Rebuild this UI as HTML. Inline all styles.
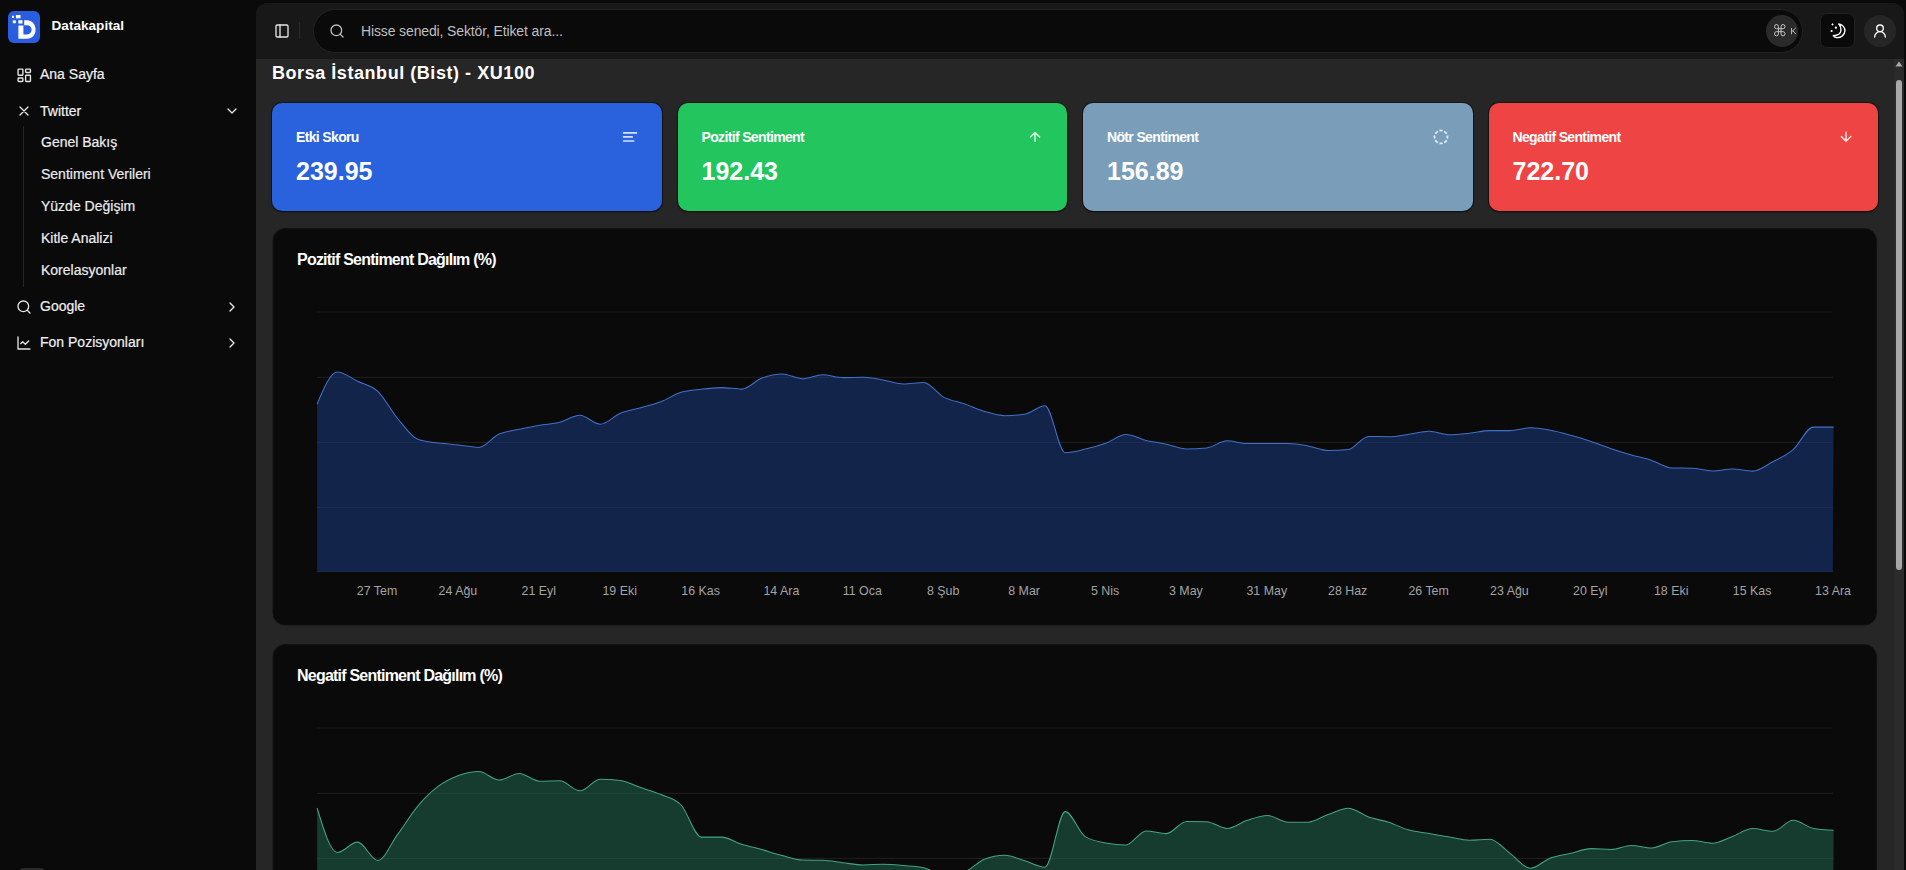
<!DOCTYPE html>
<html lang="tr">
<head>
<meta charset="utf-8">
<title>Datakapital</title>
<style>
*{box-sizing:border-box;margin:0;padding:0}
html,body{width:1906px;height:870px;overflow:hidden;background:#0a0a0a;font-family:"Liberation Sans",sans-serif;color:#fafafa}
.abs{position:absolute}
#sidebar{position:absolute;left:0;top:0;width:256px;height:870px;background:#0a0a0a}
.logo{position:absolute;left:8px;top:11px;width:32px;height:32px;border-radius:6px;background:#2a5ee0}
.brand{position:absolute;left:51.5px;top:17px;font-size:13.6px;font-weight:bold;color:#fff;line-height:18px}
.nav{position:absolute;left:40px;font-size:14px;line-height:18px;color:#f0f0f0;-webkit-text-stroke:0.2px #f0f0f0}
.sub{position:absolute;left:41px;font-size:14px;line-height:18px;color:#ececec;-webkit-text-stroke:0.2px #ececec}
.ico{position:absolute}
#main{position:absolute;left:256px;top:3px;width:1648px;height:867px;background:#262626;border-radius:12px 12px 0 0;overflow:hidden}
#header{position:absolute;left:0;top:0;width:1648px;height:56px;background:#181818}
#content{position:absolute;left:0;top:56px;width:1648px;height:811px;background:#262626}
.card{position:absolute;top:44px;width:389.5px;height:108px;border-radius:10px;box-shadow:0 0 0 1px rgba(0,0,0,0.35),0 1px 2px rgba(0,0,0,0.5)}
.card .t{position:absolute;left:24px;top:26px;font-size:14px;font-weight:bold;color:#fff;letter-spacing:-0.65px;line-height:16px}
.card .v{position:absolute;left:24px;top:54px;font-size:25px;font-weight:bold;color:#fff;line-height:28px}
.card svg{position:absolute}
.chart{position:absolute;left:16px;width:1605px;background:#0a0a0a;border-radius:12px;border:1px solid #141414}
.chart .ttl{position:absolute;left:24px;font-size:16px;font-weight:bold;color:#fff;letter-spacing:-0.4px;line-height:18px}
.xl{position:absolute;top:584px;font-size:12.4px;color:#a3a3a3;line-height:14px;white-space:nowrap;transform:translateX(-50%)}
</style>
</head>
<body>
<div id="sidebar">
  <div class="logo">
    <svg width="32" height="32" viewBox="0 0 32 32">
      <rect x="4" y="4.8" width="2" height="2.1" fill="#fff"/>
      <rect x="7.9" y="4" width="4.6" height="3.3" fill="#fff"/>
      <rect x="4.8" y="9.4" width="3.1" height="2.8" fill="#fff"/>
      <rect x="10.4" y="9.2" width="4.1" height="3.3" fill="#fff"/>
      <path d="M10.4 14.5 H15.4 V23.4 H19 C21.8 23.4 23.6 21.5 23.6 18.8 C23.6 16.1 21.8 14.3 19 14.3 H16.2 V9.2 H19 C24 9.2 27.6 13.2 27.6 18.5 C27.6 23.8 24 27.8 19 27.8 H10.4 Z" fill="#fff"/>
    </svg>
  </div>
  <div class="brand">Datakapital</div>

  <svg class="ico" style="left:16px;top:66.5px" width="16.5" height="16.5" viewBox="0 0 24 24" fill="none" stroke="#e5e5e5" stroke-width="2" stroke-linecap="round" stroke-linejoin="round"><rect width="7" height="9" x="3" y="3" rx="1"/><rect width="7" height="5" x="14" y="3" rx="1"/><rect width="7" height="9" x="14" y="12" rx="1"/><rect width="7" height="5" x="3" y="16" rx="1"/></svg>
  <div class="nav" style="top:65px">Ana Sayfa</div>

  <svg class="ico" style="left:16px;top:103px" width="16" height="16" viewBox="0 0 24 24" fill="none" stroke="#e5e5e5" stroke-width="2" stroke-linecap="round"><path d="M18 6 6 18M6 6l12 12"/></svg>
  <div class="nav" style="top:102px">Twitter</div>
  <svg class="ico" style="left:224px;top:103px" width="16" height="16" viewBox="0 0 24 24" fill="none" stroke="#e5e5e5" stroke-width="2" stroke-linecap="round" stroke-linejoin="round"><path d="m6 9 6 6 6-6"/></svg>

  <div class="abs" style="left:23px;top:126px;width:1px;height:161px;background:#262626"></div>
  <div class="sub" style="top:133px">Genel Bakış</div>
  <div class="sub" style="top:165px">Sentiment Verileri</div>
  <div class="sub" style="top:197px">Yüzde Değişim</div>
  <div class="sub" style="top:229px">Kitle Analizi</div>
  <div class="sub" style="top:261px">Korelasyonlar</div>

  <svg class="ico" style="left:16px;top:299px" width="16" height="16" viewBox="0 0 24 24" fill="none" stroke="#e5e5e5" stroke-width="2" stroke-linecap="round" stroke-linejoin="round"><circle cx="11" cy="11" r="8"/><path d="m21 21-4.3-4.3"/></svg>
  <div class="nav" style="top:297px">Google</div>
  <svg class="ico" style="left:224px;top:299px" width="16" height="16" viewBox="0 0 24 24" fill="none" stroke="#e5e5e5" stroke-width="2" stroke-linecap="round" stroke-linejoin="round"><path d="m9 18 6-6-6-6"/></svg>

  <svg class="ico" style="left:16px;top:335px" width="16" height="16" viewBox="0 0 24 24" fill="none" stroke="#e5e5e5" stroke-width="2" stroke-linecap="round" stroke-linejoin="round"><path d="M3 3v18h18"/><path d="m19 9-5 5-4-4-3 3"/></svg>
  <div class="nav" style="top:333px">Fon Pozisyonları</div>
  <svg class="ico" style="left:224px;top:335px" width="16" height="16" viewBox="0 0 24 24" fill="none" stroke="#e5e5e5" stroke-width="2" stroke-linecap="round" stroke-linejoin="round"><path d="m9 18 6-6-6-6"/></svg>

  <div class="abs" style="left:18px;top:868px;width:28px;height:20px;border-radius:6px;background:#2a2a2a"></div>
</div>

<div id="main">
  <div id="header">
    <svg class="ico" style="left:18px;top:20px" width="16" height="16" viewBox="0 0 24 24" fill="none" stroke="#e5e5e5" stroke-width="2" stroke-linecap="round" stroke-linejoin="round"><rect width="18" height="18" x="3" y="3" rx="2"/><path d="M9 3v18"/></svg>
    <div class="abs" style="left:43px;top:19px;width:1px;height:17px;background:#2a2a2a"></div>
    <div class="abs" style="left:57px;top:6px;width:1490px;height:44px;border-radius:22px;background:#0a0a0a;border:1px solid #232323"></div>
    <svg class="ico" style="left:73px;top:20px" width="16" height="16" viewBox="0 0 24 24" fill="none" stroke="#bdbdbd" stroke-width="2" stroke-linecap="round" stroke-linejoin="round"><circle cx="11" cy="11" r="8"/><path d="m21 21-4.3-4.3"/></svg>
    <div class="abs" style="left:105px;top:20px;font-size:14px;color:#bfbfbf;line-height:16px;letter-spacing:-0.13px">Hisse senedi, Sektör, Etiket ara...</div>
    <div class="abs" style="left:1510px;top:12px;width:32px;height:32px;border-radius:16px;background:#2a2a2a"></div>
    <svg class="abs" style="left:1517.8px;top:20.8px;overflow:visible" width="11.5" height="12.4" viewBox="0 0 11.5 12.4" fill="none" stroke="#cfcfcf" stroke-width="1"><g transform="translate(0.5 0.5) scale(0.913 0.919)"><path d="M4.3 4.6H7.2V7.8H4.3Z M4.3 4.6V2.3A2.15 2.3 0 1 0 2.15 4.6H4.3 M7.2 4.6V2.3A2.15 2.3 0 1 1 9.35 4.6H7.2 M4.3 7.8V10.1A2.15 2.3 0 1 1 2.15 7.8H4.3 M7.2 7.8V10.1A2.15 2.3 0 1 0 9.35 7.8H7.2"/></g></svg>
    <svg class="abs" style="left:1534.8px;top:24.7px;overflow:visible" width="5" height="6.2" fill="none" stroke="#bdbdbd" stroke-width="0.95"><path d="M0.5 0V6.2 M4.7 0 L0.5 4 M1.9 2.7 L4.8 6.2"/></svg>
    <div class="abs" style="left:1564px;top:10px;width:35px;height:35px;border-radius:7px;background:#0a0a0a;border:1px solid #222"></div>
    <svg class="abs" style="left:1568px;top:13px" width="28" height="28" viewBox="0 0 28 28" fill="none" stroke="#fff" stroke-width="1.4" stroke-linejoin="round"><path d="M14.8 8 C19 8.6 21.1 12 20.9 15 C20.6 19 17 21.9 12.9 21.6 C11.3 21.5 10.1 20.8 9.3 19.6 C13.6 19.6 16.9 17.4 17 14 C17.1 11.6 16.2 9.4 14.8 8 Z"/><g fill="#fff" stroke="none"><path d="M8.5 6.8 L9 8 L10.2 8.4 L9 8.8 L8.5 10 L8 8.8 L6.8 8.4 L8 8 Z"/><circle cx="11.9" cy="11.7" r="1.1"/><circle cx="7.6" cy="15" r="1.1"/></g></svg>
    <div class="abs" style="left:1608px;top:12px;width:32px;height:32px;border-radius:16px;background:#262626"></div>
    <svg class="ico" style="left:1616px;top:20px" width="16" height="16" viewBox="0 0 24 24" fill="none" stroke="#fff" stroke-width="2" stroke-linecap="round" stroke-linejoin="round"><circle cx="12" cy="8" r="5"/><path d="M20 21a8 8 0 0 0-16 0"/></svg>
  </div>

  <div id="content">
    <div class="abs" style="left:16px;top:3px;font-size:18px;font-weight:bold;color:#fff;line-height:22px;letter-spacing:0.55px">Borsa İstanbul (Bist) - XU100</div>

    <div class="card" style="left:16px;background:#2962dc">
      <div class="t">Etki Skoru</div><div class="v">239.95</div>
    </div>
    <div class="card" style="left:421.5px;background:#22c55e">
      <div class="t">Pozitif Sentiment</div><div class="v">192.43</div>
    </div>
    <div class="card" style="left:827px;background:#7a9eb9">
      <div class="t">Nötr Sentiment</div><div class="v">156.89</div>
    </div>
    <div class="card" style="left:1232.5px;background:#ef4444">
      <div class="t">Negatif Sentiment</div><div class="v">722.70</div>
    </div>

    <!-- scrollbar -->
    <div class="abs" style="left:1638px;top:0;width:10px;height:811px;background:#2b2b2b"></div>
  </div>
</div>

<!-- charts in page coordinates -->
<svg class="abs" style="left:0;top:0" width="1906" height="870">
  <rect x="273" y="228.5" width="1603.5" height="396.5" rx="12" fill="#0a0a0a" stroke="#121212"/>
  <rect x="273" y="644.5" width="1603.5" height="400" rx="12" fill="#0a0a0a" stroke="#121212"/>
  <g stroke="#161616" stroke-width="1">
    <line x1="317" x2="1833" y1="312" y2="312"/>
    <line x1="317" x2="1833" y1="377.3" y2="377.3"/>
    <line x1="317" x2="1833" y1="442.3" y2="442.3"/>
    <line x1="317" x2="1833" y1="507.3" y2="507.3"/>
    <line x1="317" x2="1833" y1="728" y2="728"/>
    <line x1="317" x2="1833" y1="793.3" y2="793.3"/>
    <line x1="317" x2="1833" y1="858.3" y2="858.3"/>
  </g>
  <path d="M317.1,404.3 C323.8,388.1 330.6,372.0 337.3,372.0 C344.1,372.0 350.8,378.1 357.5,381.3 C364.3,384.5 371.0,385.1 377.8,391.4 C384.5,397.7 391.2,411.0 398.0,419.0 C404.7,427.0 411.5,437.3 418.2,439.6 C424.9,441.9 431.7,442.1 438.4,443.0 C445.2,443.9 451.9,444.2 458.6,444.9 C465.4,445.6 472.1,447.4 478.9,447.4 C485.6,447.4 492.3,437.0 499.1,434.0 C505.8,431.0 512.6,430.8 519.3,429.3 C526.0,427.9 532.8,426.5 539.5,425.3 C546.3,424.1 553.0,423.9 559.7,422.2 C566.5,420.5 573.2,415.3 580.0,415.3 C586.7,415.3 593.4,424.2 600.2,424.2 C606.9,424.2 613.7,416.0 620.4,413.3 C627.1,410.6 633.9,409.7 640.6,407.8 C647.4,405.9 654.1,404.3 660.8,401.7 C667.6,399.1 674.3,394.4 681.1,392.3 C687.8,390.2 694.5,390.0 701.3,389.2 C708.0,388.4 714.8,387.6 721.5,387.6 C728.2,387.6 735.0,389.1 741.7,389.1 C748.5,389.1 755.2,380.6 761.9,378.1 C768.7,375.6 775.4,373.9 782.2,373.9 C788.9,373.9 795.6,378.8 802.4,378.8 C809.1,378.8 815.9,374.7 822.6,374.7 C829.3,374.7 836.1,377.6 842.8,377.6 C849.6,377.6 856.3,377.3 863.0,377.3 C869.8,377.3 876.5,378.8 883.3,379.9 C890.0,381.0 896.7,383.9 903.5,383.9 C910.2,383.9 917.0,382.4 923.7,382.4 C930.4,382.4 937.2,393.8 943.9,397.4 C950.7,400.9 957.4,401.4 964.1,403.7 C970.9,406.0 977.6,409.4 984.4,411.4 C991.1,413.4 997.8,415.7 1004.6,415.7 C1011.3,415.7 1018.1,415.2 1024.8,414.2 C1031.5,413.2 1038.3,405.7 1045.0,405.7 C1051.8,405.7 1058.5,452.7 1065.2,452.7 C1072.0,452.7 1078.7,450.7 1085.5,449.1 C1092.2,447.5 1098.9,445.7 1105.7,443.3 C1112.4,440.9 1119.2,434.5 1125.9,434.5 C1132.6,434.5 1139.4,438.8 1146.1,440.4 C1152.9,442.0 1159.6,442.8 1166.3,444.2 C1173.1,445.6 1179.8,449.0 1186.6,449.0 C1193.3,449.0 1200.0,448.6 1206.8,447.9 C1213.5,447.2 1220.3,440.8 1227.0,440.8 C1233.7,440.8 1240.5,443.5 1247.2,443.5 C1254.0,443.5 1260.7,443.5 1267.4,443.5 C1274.2,443.5 1280.9,443.5 1287.7,443.5 C1294.4,443.5 1301.1,444.7 1307.9,445.9 C1314.6,447.1 1321.4,450.5 1328.1,450.5 C1334.8,450.5 1341.6,450.2 1348.3,449.6 C1355.1,449.0 1361.8,436.4 1368.5,436.4 C1375.3,436.4 1382.0,436.7 1388.8,436.7 C1395.5,436.7 1402.2,435.1 1409.0,434.2 C1415.7,433.3 1422.5,431.3 1429.2,431.3 C1435.9,431.3 1442.7,434.8 1449.4,434.8 C1456.2,434.8 1462.9,434.0 1469.6,433.3 C1476.4,432.6 1483.1,430.6 1489.9,430.6 C1496.6,430.6 1503.3,430.6 1510.1,430.6 C1516.8,430.6 1523.6,427.8 1530.3,427.8 C1537.0,427.8 1543.8,429.1 1550.5,430.3 C1557.3,431.6 1564.0,433.5 1570.7,435.3 C1577.5,437.1 1584.2,439.2 1591.0,441.4 C1597.7,443.6 1604.4,446.4 1611.2,448.7 C1617.9,451.0 1624.7,453.1 1631.4,455.0 C1638.1,456.9 1644.9,458.2 1651.6,460.4 C1658.4,462.6 1665.1,467.9 1671.8,468.0 C1678.6,468.1 1685.3,468.1 1692.1,468.2 C1698.8,468.3 1705.5,470.9 1712.3,470.9 C1719.0,470.9 1725.8,469.0 1732.5,469.0 C1739.2,469.0 1746.0,471.1 1752.7,471.1 C1759.5,471.1 1766.2,465.3 1772.9,461.7 C1779.7,458.1 1786.4,455.4 1793.2,449.6 C1799.9,443.8 1806.6,427.1 1813.4,427.1 C1820.1,427.1 1826.9,427.1 1833.6,427.1 L1832.8,572 L317.1,572 Z" fill="#13244a"/>
  <path d="M317.1,808.0 C323.8,830.2 330.6,852.5 337.3,852.5 C344.1,852.5 350.8,842.1 357.5,842.1 C364.3,842.1 371.0,860.4 377.8,860.4 C384.5,860.4 391.2,843.0 398.0,833.9 C404.7,824.8 411.5,813.5 418.2,805.6 C424.9,797.6 431.7,791.2 438.4,786.2 C445.2,781.2 451.9,778.0 458.6,775.5 C465.4,773.0 472.1,771.5 478.9,771.5 C485.6,771.5 492.3,780.0 499.1,780.0 C505.8,780.0 512.6,773.4 519.3,773.4 C526.0,773.4 532.8,781.2 539.5,781.2 C546.3,781.2 553.0,780.8 559.7,780.8 C566.5,780.8 573.2,790.8 580.0,790.8 C586.7,790.8 593.4,779.2 600.2,779.2 C606.9,779.2 613.7,779.6 620.4,780.5 C627.1,781.4 633.9,785.2 640.6,787.6 C647.4,790.0 654.1,791.7 660.8,794.6 C667.6,797.5 674.3,798.1 681.1,805.0 C687.8,811.9 694.5,837.1 701.3,837.1 C708.0,837.1 714.8,837.1 721.5,837.1 C728.2,837.1 735.0,842.2 741.7,844.3 C748.5,846.4 755.2,847.7 761.9,849.6 C768.7,851.5 775.4,853.9 782.2,855.6 C788.9,857.4 795.6,860.0 802.4,860.1 C809.1,860.2 815.9,860.2 822.6,860.3 C829.3,860.4 836.1,861.9 842.8,862.7 C849.6,863.5 856.3,865.0 863.0,865.0 C869.8,865.0 876.5,864.2 883.3,864.2 C890.0,864.2 896.7,864.9 903.5,865.5 C910.2,866.1 917.0,866.2 923.7,867.7 C930.4,869.2 937.2,874.8 943.9,874.8 C950.7,874.8 957.4,873.9 964.1,872.1 C970.9,870.3 977.6,861.8 984.4,859.2 C991.1,856.6 997.8,855.3 1004.6,855.3 C1011.3,855.3 1018.1,858.8 1024.8,860.8 C1031.5,862.8 1038.3,867.2 1045.0,867.2 C1051.8,867.2 1058.5,811.6 1065.2,811.6 C1072.0,811.6 1078.7,832.9 1085.5,836.9 C1092.2,840.9 1098.9,841.5 1105.7,842.9 C1112.4,844.2 1119.2,845.0 1125.9,845.0 C1132.6,845.0 1139.4,830.9 1146.1,830.9 C1152.9,830.9 1159.6,833.6 1166.3,833.6 C1173.1,833.6 1179.8,821.4 1186.6,821.4 C1193.3,821.4 1200.0,821.5 1206.8,821.7 C1213.5,821.9 1220.3,828.4 1227.0,828.4 C1233.7,828.4 1240.5,822.5 1247.2,820.3 C1254.0,818.1 1260.7,815.4 1267.4,815.4 C1274.2,815.4 1280.9,822.2 1287.7,822.2 C1294.4,822.2 1301.1,822.2 1307.9,822.2 C1314.6,822.2 1321.4,816.8 1328.1,814.5 C1334.8,812.2 1341.6,808.2 1348.3,808.2 C1355.1,808.2 1361.8,814.6 1368.5,817.0 C1375.3,819.4 1382.0,820.1 1388.8,822.3 C1395.5,824.5 1402.2,828.2 1409.0,830.1 C1415.7,832.0 1422.5,832.4 1429.2,833.6 C1435.9,834.8 1442.7,836.0 1449.4,837.1 C1456.2,838.2 1462.9,840.2 1469.6,840.2 C1476.4,840.2 1483.1,839.2 1489.9,839.2 C1496.6,839.2 1503.3,848.5 1510.1,853.4 C1516.8,858.2 1523.6,868.3 1530.3,868.3 C1537.0,868.3 1543.8,860.5 1550.5,858.0 C1557.3,855.5 1564.0,854.9 1570.7,853.3 C1577.5,851.7 1584.2,848.6 1591.0,848.6 C1597.7,848.6 1604.4,849.4 1611.2,849.4 C1617.9,849.4 1624.7,845.4 1631.4,845.4 C1638.1,845.4 1644.9,847.9 1651.6,847.9 C1658.4,847.9 1665.1,842.7 1671.8,841.8 C1678.6,840.9 1685.3,840.4 1692.1,840.4 C1698.8,840.4 1705.5,843.3 1712.3,843.3 C1719.0,843.3 1725.8,838.9 1732.5,836.4 C1739.2,833.9 1746.0,828.5 1752.7,828.5 C1759.5,828.5 1766.2,831.3 1772.9,831.3 C1779.7,831.3 1786.4,820.3 1793.2,820.3 C1799.9,820.3 1806.6,827.2 1813.4,828.4 C1820.1,829.6 1826.9,829.9 1833.6,830.2 L1833,990 L317.1,990 Z" fill="#163c2f"/>
  <g stroke="#ffffff" stroke-opacity="0.05" stroke-width="1">
    <line x1="317" x2="1833" y1="377.3" y2="377.3"/>
    <line x1="317" x2="1833" y1="442.3" y2="442.3"/>
    <line x1="317" x2="1833" y1="507.3" y2="507.3"/>
    <line x1="317" x2="1833" y1="571.8" y2="571.8"/>
    <line x1="317" x2="1833" y1="793.3" y2="793.3"/>
    <line x1="317" x2="1833" y1="858.3" y2="858.3"/>
  </g>
  <path d="M317.1,404.3 C323.8,388.1 330.6,372.0 337.3,372.0 C344.1,372.0 350.8,378.1 357.5,381.3 C364.3,384.5 371.0,385.1 377.8,391.4 C384.5,397.7 391.2,411.0 398.0,419.0 C404.7,427.0 411.5,437.3 418.2,439.6 C424.9,441.9 431.7,442.1 438.4,443.0 C445.2,443.9 451.9,444.2 458.6,444.9 C465.4,445.6 472.1,447.4 478.9,447.4 C485.6,447.4 492.3,437.0 499.1,434.0 C505.8,431.0 512.6,430.8 519.3,429.3 C526.0,427.9 532.8,426.5 539.5,425.3 C546.3,424.1 553.0,423.9 559.7,422.2 C566.5,420.5 573.2,415.3 580.0,415.3 C586.7,415.3 593.4,424.2 600.2,424.2 C606.9,424.2 613.7,416.0 620.4,413.3 C627.1,410.6 633.9,409.7 640.6,407.8 C647.4,405.9 654.1,404.3 660.8,401.7 C667.6,399.1 674.3,394.4 681.1,392.3 C687.8,390.2 694.5,390.0 701.3,389.2 C708.0,388.4 714.8,387.6 721.5,387.6 C728.2,387.6 735.0,389.1 741.7,389.1 C748.5,389.1 755.2,380.6 761.9,378.1 C768.7,375.6 775.4,373.9 782.2,373.9 C788.9,373.9 795.6,378.8 802.4,378.8 C809.1,378.8 815.9,374.7 822.6,374.7 C829.3,374.7 836.1,377.6 842.8,377.6 C849.6,377.6 856.3,377.3 863.0,377.3 C869.8,377.3 876.5,378.8 883.3,379.9 C890.0,381.0 896.7,383.9 903.5,383.9 C910.2,383.9 917.0,382.4 923.7,382.4 C930.4,382.4 937.2,393.8 943.9,397.4 C950.7,400.9 957.4,401.4 964.1,403.7 C970.9,406.0 977.6,409.4 984.4,411.4 C991.1,413.4 997.8,415.7 1004.6,415.7 C1011.3,415.7 1018.1,415.2 1024.8,414.2 C1031.5,413.2 1038.3,405.7 1045.0,405.7 C1051.8,405.7 1058.5,452.7 1065.2,452.7 C1072.0,452.7 1078.7,450.7 1085.5,449.1 C1092.2,447.5 1098.9,445.7 1105.7,443.3 C1112.4,440.9 1119.2,434.5 1125.9,434.5 C1132.6,434.5 1139.4,438.8 1146.1,440.4 C1152.9,442.0 1159.6,442.8 1166.3,444.2 C1173.1,445.6 1179.8,449.0 1186.6,449.0 C1193.3,449.0 1200.0,448.6 1206.8,447.9 C1213.5,447.2 1220.3,440.8 1227.0,440.8 C1233.7,440.8 1240.5,443.5 1247.2,443.5 C1254.0,443.5 1260.7,443.5 1267.4,443.5 C1274.2,443.5 1280.9,443.5 1287.7,443.5 C1294.4,443.5 1301.1,444.7 1307.9,445.9 C1314.6,447.1 1321.4,450.5 1328.1,450.5 C1334.8,450.5 1341.6,450.2 1348.3,449.6 C1355.1,449.0 1361.8,436.4 1368.5,436.4 C1375.3,436.4 1382.0,436.7 1388.8,436.7 C1395.5,436.7 1402.2,435.1 1409.0,434.2 C1415.7,433.3 1422.5,431.3 1429.2,431.3 C1435.9,431.3 1442.7,434.8 1449.4,434.8 C1456.2,434.8 1462.9,434.0 1469.6,433.3 C1476.4,432.6 1483.1,430.6 1489.9,430.6 C1496.6,430.6 1503.3,430.6 1510.1,430.6 C1516.8,430.6 1523.6,427.8 1530.3,427.8 C1537.0,427.8 1543.8,429.1 1550.5,430.3 C1557.3,431.6 1564.0,433.5 1570.7,435.3 C1577.5,437.1 1584.2,439.2 1591.0,441.4 C1597.7,443.6 1604.4,446.4 1611.2,448.7 C1617.9,451.0 1624.7,453.1 1631.4,455.0 C1638.1,456.9 1644.9,458.2 1651.6,460.4 C1658.4,462.6 1665.1,467.9 1671.8,468.0 C1678.6,468.1 1685.3,468.1 1692.1,468.2 C1698.8,468.3 1705.5,470.9 1712.3,470.9 C1719.0,470.9 1725.8,469.0 1732.5,469.0 C1739.2,469.0 1746.0,471.1 1752.7,471.1 C1759.5,471.1 1766.2,465.3 1772.9,461.7 C1779.7,458.1 1786.4,455.4 1793.2,449.6 C1799.9,443.8 1806.6,427.1 1813.4,427.1 C1820.1,427.1 1826.9,427.1 1833.6,427.1" fill="none" stroke="#4070c8" stroke-width="1.05"/>
  <path d="M317.1,808.0 C323.8,830.2 330.6,852.5 337.3,852.5 C344.1,852.5 350.8,842.1 357.5,842.1 C364.3,842.1 371.0,860.4 377.8,860.4 C384.5,860.4 391.2,843.0 398.0,833.9 C404.7,824.8 411.5,813.5 418.2,805.6 C424.9,797.6 431.7,791.2 438.4,786.2 C445.2,781.2 451.9,778.0 458.6,775.5 C465.4,773.0 472.1,771.5 478.9,771.5 C485.6,771.5 492.3,780.0 499.1,780.0 C505.8,780.0 512.6,773.4 519.3,773.4 C526.0,773.4 532.8,781.2 539.5,781.2 C546.3,781.2 553.0,780.8 559.7,780.8 C566.5,780.8 573.2,790.8 580.0,790.8 C586.7,790.8 593.4,779.2 600.2,779.2 C606.9,779.2 613.7,779.6 620.4,780.5 C627.1,781.4 633.9,785.2 640.6,787.6 C647.4,790.0 654.1,791.7 660.8,794.6 C667.6,797.5 674.3,798.1 681.1,805.0 C687.8,811.9 694.5,837.1 701.3,837.1 C708.0,837.1 714.8,837.1 721.5,837.1 C728.2,837.1 735.0,842.2 741.7,844.3 C748.5,846.4 755.2,847.7 761.9,849.6 C768.7,851.5 775.4,853.9 782.2,855.6 C788.9,857.4 795.6,860.0 802.4,860.1 C809.1,860.2 815.9,860.2 822.6,860.3 C829.3,860.4 836.1,861.9 842.8,862.7 C849.6,863.5 856.3,865.0 863.0,865.0 C869.8,865.0 876.5,864.2 883.3,864.2 C890.0,864.2 896.7,864.9 903.5,865.5 C910.2,866.1 917.0,866.2 923.7,867.7 C930.4,869.2 937.2,874.8 943.9,874.8 C950.7,874.8 957.4,873.9 964.1,872.1 C970.9,870.3 977.6,861.8 984.4,859.2 C991.1,856.6 997.8,855.3 1004.6,855.3 C1011.3,855.3 1018.1,858.8 1024.8,860.8 C1031.5,862.8 1038.3,867.2 1045.0,867.2 C1051.8,867.2 1058.5,811.6 1065.2,811.6 C1072.0,811.6 1078.7,832.9 1085.5,836.9 C1092.2,840.9 1098.9,841.5 1105.7,842.9 C1112.4,844.2 1119.2,845.0 1125.9,845.0 C1132.6,845.0 1139.4,830.9 1146.1,830.9 C1152.9,830.9 1159.6,833.6 1166.3,833.6 C1173.1,833.6 1179.8,821.4 1186.6,821.4 C1193.3,821.4 1200.0,821.5 1206.8,821.7 C1213.5,821.9 1220.3,828.4 1227.0,828.4 C1233.7,828.4 1240.5,822.5 1247.2,820.3 C1254.0,818.1 1260.7,815.4 1267.4,815.4 C1274.2,815.4 1280.9,822.2 1287.7,822.2 C1294.4,822.2 1301.1,822.2 1307.9,822.2 C1314.6,822.2 1321.4,816.8 1328.1,814.5 C1334.8,812.2 1341.6,808.2 1348.3,808.2 C1355.1,808.2 1361.8,814.6 1368.5,817.0 C1375.3,819.4 1382.0,820.1 1388.8,822.3 C1395.5,824.5 1402.2,828.2 1409.0,830.1 C1415.7,832.0 1422.5,832.4 1429.2,833.6 C1435.9,834.8 1442.7,836.0 1449.4,837.1 C1456.2,838.2 1462.9,840.2 1469.6,840.2 C1476.4,840.2 1483.1,839.2 1489.9,839.2 C1496.6,839.2 1503.3,848.5 1510.1,853.4 C1516.8,858.2 1523.6,868.3 1530.3,868.3 C1537.0,868.3 1543.8,860.5 1550.5,858.0 C1557.3,855.5 1564.0,854.9 1570.7,853.3 C1577.5,851.7 1584.2,848.6 1591.0,848.6 C1597.7,848.6 1604.4,849.4 1611.2,849.4 C1617.9,849.4 1624.7,845.4 1631.4,845.4 C1638.1,845.4 1644.9,847.9 1651.6,847.9 C1658.4,847.9 1665.1,842.7 1671.8,841.8 C1678.6,840.9 1685.3,840.4 1692.1,840.4 C1698.8,840.4 1705.5,843.3 1712.3,843.3 C1719.0,843.3 1725.8,838.9 1732.5,836.4 C1739.2,833.9 1746.0,828.5 1752.7,828.5 C1759.5,828.5 1766.2,831.3 1772.9,831.3 C1779.7,831.3 1786.4,820.3 1793.2,820.3 C1799.9,820.3 1806.6,827.2 1813.4,828.4 C1820.1,829.6 1826.9,829.9 1833.6,830.2" fill="none" stroke="#44a382" stroke-width="1.05"/>
</svg>
<div class="abs" style="left:297px;top:251px;font-size:16px;font-weight:bold;color:#fff;letter-spacing:-0.78px;line-height:18px">Pozitif Sentiment Dağılım (%)</div>
<div class="abs" style="left:297px;top:667px;font-size:16px;font-weight:bold;color:#fff;letter-spacing:-0.78px;line-height:18px">Negatif Sentiment Dağılım (%)</div>
<div class="xl" style="left:377.0px">27 Tem</div>
<div class="xl" style="left:457.9px">24 Ağu</div>
<div class="xl" style="left:538.8px">21 Eyl</div>
<div class="xl" style="left:619.7px">19 Eki</div>
<div class="xl" style="left:700.6px">16 Kas</div>
<div class="xl" style="left:781.4px">14 Ara</div>
<div class="xl" style="left:862.3px">11 Oca</div>
<div class="xl" style="left:943.2px">8 Şub</div>
<div class="xl" style="left:1024.1px">8 Mar</div>
<div class="xl" style="left:1105.0px">5 Nis</div>
<div class="xl" style="left:1185.9px">3 May</div>
<div class="xl" style="left:1266.8px">31 May</div>
<div class="xl" style="left:1347.7px">28 Haz</div>
<div class="xl" style="left:1428.6px">26 Tem</div>
<div class="xl" style="left:1509.4px">23 Ağu</div>
<div class="xl" style="left:1590.3px">20 Eyl</div>
<div class="xl" style="left:1671.2px">18 Eki</div>
<div class="xl" style="left:1752.1px">15 Kas</div>
<div class="xl" style="left:1833.0px">13 Ara</div>

<svg class="abs" style="left:0;top:0" width="1906" height="870" fill="none" stroke-linecap="round" stroke-linejoin="round">
  <g stroke="#d6e2ff" stroke-width="1.7"><path d="M623.6 132.9H636.4M623.6 136.9H632.2M623.6 141H633.7"/></g>
  <g stroke="#d2f7dc" stroke-width="1.5"><path d="M1035 141.3V132.8M1030.4 137 L1035 132.6 L1039.7 137.1"/></g>
  <circle cx="1441" cy="137" r="6.5" pathLength="80" stroke="#e6f0fa" stroke-width="1.7" stroke-linecap="butt" stroke-dasharray="6.4 3.6" stroke-dashoffset="3.2"/>
  <g stroke="#ffe0e0" stroke-width="1.5"><path d="M1846 132.3V141M1841.4 136.6 L1846 141.2 L1850.8 136.5"/></g>
</svg>
<!-- scrollbar thumb -->
<div class="abs" style="left:1896px;top:80px;width:6px;height:490px;border-radius:3px;background:#a8a8a8"></div>
<svg class="abs" style="left:1895px;top:61px" width="8" height="6"><path d="M4 0.5 L7.5 5.5 H0.5 Z" fill="#a8a8a8"/></svg>
<div class="abs" style="left:1904px;top:0;width:2px;height:870px;background:#0a0a0a"></div>
</body>
</html>
